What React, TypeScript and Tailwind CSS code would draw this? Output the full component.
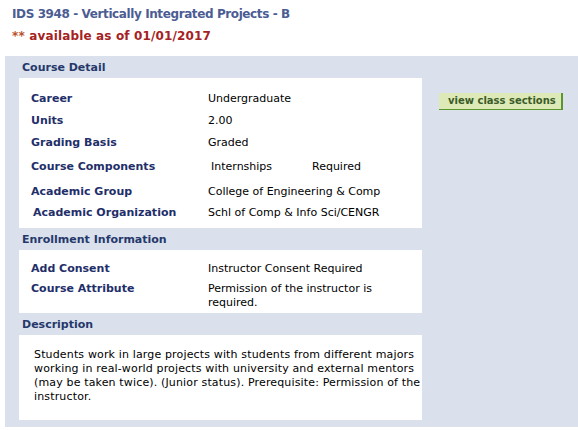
import React from "react";

const font = { fontFamily: '"DejaVu Sans", Verdana, sans-serif' };

const detailRows: { label: string; value: React.ReactNode; h: string; indent?: boolean }[] = [
  { label: "Career", value: "Undergraduate", h: "h-[21px]" },
  { label: "Units", value: "2.00", h: "h-[22px]" },
  { label: "Grading Basis", value: "Graded", h: "h-[22px]" },
  {
    label: "Course Components",
    value: (
      <div className="flex pl-[3px]">
        <span className="w-[101px]">Internships</span>
        <span>Required</span>
      </div>
    ),
    h: "h-[26px]",
  },
  { label: "Academic Group", value: "College of Engineering & Comp", h: "h-[24px]" },
  { label: "Academic Organization", value: "Schl of Comp & Info Sci/CENGR", h: "h-[18px]", indent: true },
];

function SectionHeader({ title }: { title: string }) {
  return (
    <div className="h-[22px] flex items-center pt-[3px] pl-[3px] text-[11px] font-bold text-[#26386b]">
      {title}
    </div>
  );
}

export default function App() {
  return (
    <div className="w-[578px] h-[430px] bg-white text-[11px] text-black overflow-hidden" style={font}>
      {/* Title */}
      <div className="pl-[12px] pt-[5px] h-[26px] text-[12px] font-bold text-[#4b5c93] tracking-[-0.4px]">
        IDS 3948 - Vertically Integrated Projects - B
      </div>
      <div className="pl-[12px] pt-[1px] h-[30px] text-[12px] font-bold text-[#a52222] tracking-[0.15px]">
        <span className="text-[#b8502a]">**</span> available as of 01/01/2017
      </div>

      {/* Panel */}
      <div className="ml-[5px] bg-[#dae1ec] flex pb-[7px]">
        <div className="pl-[14px] w-[417px] flex flex-col">
          <SectionHeader title="Course Detail" />
          <div className="bg-white pt-[11px] pb-[6px]">
            {detailRows.map(r => (
              <div key={r.label} className={`${r.h} flex items-center`}>
                <div
                  className={`${r.indent ? "pl-[14px] w-[189px]" : "pl-[12px] w-[189px]"} font-bold text-[#1f2f6a]`}
                >
                  {r.label}
                </div>
                <div>{r.value}</div>
              </div>
            ))}
          </div>

          <SectionHeader title="Enrollment Information" />
          <div className="bg-white pt-[9px] pb-[3px]">
            <div className="h-[20px] flex items-center">
              <div className="pl-[12px] w-[189px] font-bold text-[#1f2f6a]">Add Consent</div>
              <div>Instructor Consent Required</div>
            </div>
            <div className="mt-[3px] flex leading-[14px]">
              <div className="pl-[12px] w-[189px] font-bold text-[#1f2f6a]">Course Attribute</div>
              <div className="whitespace-nowrap">
                Permission of the instructor is
                <br />
                required.
              </div>
            </div>
          </div>

          <SectionHeader title="Description" />
          <div className="bg-white pt-[13px] pb-[16px] pl-[15px] leading-[14px] whitespace-nowrap tracking-[0.15px]">
            Students work in large projects with students from different majors
            <br />
            working in real-world projects with university and external mentors
            <br />
            (may be taken twice). (Junior status). Prerequisite: Permission of the
            <br />
            instructor.
          </div>
        </div>

        <div className="pl-[17px] pt-[37px]">
          <button className="h-[17px] pl-[9px] pr-[5px] bg-[#dde9b6] border-r-2 border-b border-[#5b962c] text-[10px] font-bold text-[#3a5b2a] leading-none flex items-center">
            view class sections
          </button>
        </div>
      </div>
    </div>
  );
}
